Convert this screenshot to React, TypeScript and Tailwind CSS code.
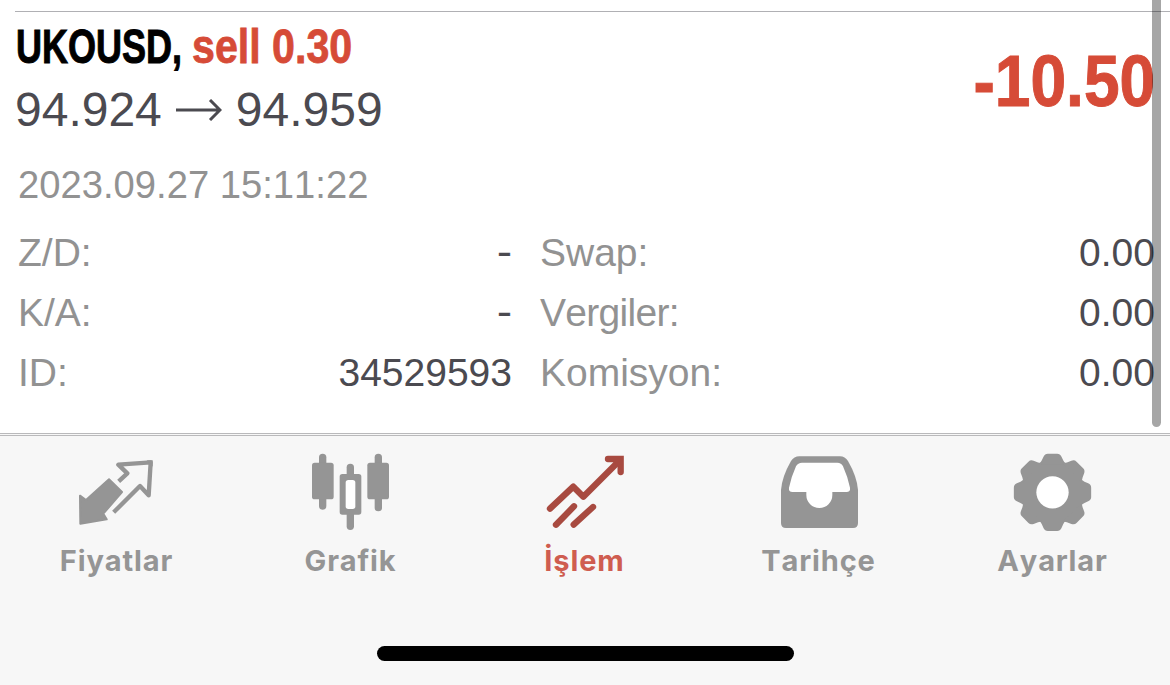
import { ReactNode } from 'react';
import clsx from 'clsx';

type Tab = {
  label: string;
  icon: ReactNode;
  active?: boolean;
};

const details = [
  { left: 'Z/D:', leftValue: '-', right: 'Swap:', rightValue: '0.00' },
  { left: 'K/A:', leftValue: '-', right: 'Vergiler:', rightValue: '0.00' },
  { left: 'ID:', leftValue: '34529593', right: 'Komisyon:', rightValue: '0.00' }
];

const gearAngles = [0, 45, 90, 135, 180, 225, 270, 315];

const QuotesIcon = () => (
  <svg viewBox="111 66 240 240" className="h-20 w-20" fill="#959595" stroke="#959595" strokeLinejoin="round">
    <path
      d="M207 148 L246 186 L190 251 L200 268 L121 281 L120 197 L138 210 Z"
      strokeWidth="6"
    />
    <path
      d="M236 154 L262 130 L235 104 L332 97 L326 196 L300 168 L221 247"
      fill="none"
      strokeWidth="13"
    />
    <path d="M320 91 H338 V110 Z" stroke="none" />
  </svg>
);

const ChartIcon = () => (
  <svg viewBox="93 66 240 240" className="h-20 w-20" fill="#959595">
    <rect x="117" y="71" width="22" height="168" rx="11" />
    <rect x="96" y="98" width="65" height="110" rx="8" />
    <rect x="200" y="101" width="22" height="199" rx="11" />
    <rect x="179" y="132" width="65" height="122" rx="8" />
    <rect x="197" y="150" width="29" height="87" rx="8" fill="#fff" />
    <rect x="284" y="71" width="22" height="173" rx="11" />
    <rect x="262" y="98" width="65" height="110" rx="8" />
  </svg>
);

const TradeIcon = () => (
  <svg
    viewBox="105 66 240 240"
    className="h-20 w-20"
    fill="none"
    stroke="#a84a40"
    strokeWidth="19"
    strokeLinecap="round"
    strokeLinejoin="round"
  >
    <path d="M120 236 L190 170 L220 200 L325 95" />
    <path d="M294 87 H332 V126" strokeLinejoin="miter" />
    <path d="M138 284 L192 229" />
    <path d="M191 284 L249 231" />
    <path d="M302 90 H333 V118 Z" fill="#a84a40" stroke="none" />
  </svg>
);

const HistoryIcon = () => (
  <svg viewBox="117 66 240 240" className="h-20 w-20">
    <path
      d="M178 79 H300 Q315 79 324 93 Q351 140 354 180 V279 Q354 294 339 294 H138 Q123 294 123 279 V180 Q126 140 153 93 Q162 79 178 79 Z"
      fill="#959595"
    />
    <path
      d="M186 98 H292 Q304 98 309 109 Q323 140 330 173 Q332 186 319 186 H277 V195 A39 39 0 0 1 199 195 V186 H158 Q145 186 147 173 Q154 140 168 109 Q174 98 186 98 Z"
      fill="#fff"
    />
  </svg>
);

const SettingsIcon = () => (
  <svg viewBox="99 66 240 240" className="h-20 w-20" fill="#959595">
    <g transform="translate(217.5 187)">
      <circle r="94" />
      {gearAngles.map((angle) => (
        <path
          key={angle}
          transform={`rotate(${angle})`}
          d="M-42 -84 Q-35 -89 -32 -96 L-27 -107 Q-23 -116 -14 -116 H14 Q23 -116 27 -107 L32 -96 Q35 -89 42 -84 Z"
        />
      ))}
      <circle r="48.5" fill="#fff" />
    </g>
  </svg>
);

const tabs: Tab[] = [
  { label: 'Fiyatlar', icon: <QuotesIcon /> },
  { label: 'Grafik', icon: <ChartIcon /> },
  { label: 'İşlem', icon: <TradeIcon />, active: true },
  { label: 'Tarihçe', icon: <HistoryIcon /> },
  { label: 'Ayarlar', icon: <SettingsIcon /> }
];

// an empty value is a hyphen, a bit wider than the font's own
function Value({ value }: { value: string }) {
  return (
    <span
      className={clsx(
        'text-[#4b4a50]',
        value === '-' && '-mt-px origin-right scale-x-[1.15] [-webkit-text-stroke:0.2px]'
      )}
    >
      {value}
    </span>
  );
}

function Position() {
  return (
    <section className="ml-[15px] mt-[11px] border-t border-[#b0b0b4] pr-[15px] pt-1">
      <div className="flex justify-between">
        <div>
          <div className="flex h-[60px] text-[49px] font-bold leading-[60px] whitespace-nowrap">
            <span className="ml-px block w-[176px] origin-left scale-x-[0.735] text-black [-webkit-text-stroke:1px]">
              UKOUSD,
            </span>
            <span className="block origin-left scale-x-[0.84] text-[#d64b37] [-webkit-text-stroke:0.8px]">
              sell 0.30
            </span>
          </div>
          <div className="mt-1 flex h-[60px] items-center text-[48px] leading-[60px] text-[#4b4a50]">
            <span>94.924</span>
            <svg viewBox="0 0 46 22" className="mx-[14px] h-[22px] w-[46px]" fill="none" stroke="#4b4a50" strokeWidth="3">
              <path d="M0 11 H44 M34 1 L44 11 L34 21" />
            </svg>
            <span>94.959</span>
          </div>
        </div>
        <div className="mt-[20px] origin-right scale-x-[0.89] text-[72px] font-bold leading-[90px] text-[#d64b37] [-webkit-text-stroke:1px]">
          -10.50
        </div>
      </div>
      <div className="ml-[3px] mt-[15px] text-[38.2px] leading-[60px] text-[#929292]">2023.09.27 15:11:22</div>
      <div className="ml-[3px] mt-2 text-[39px] leading-[60px] text-[#929292]">
        {details.map((row) => (
          <div key={row.left} className="flex">
            <div className="flex w-[494px] justify-between">
              <span>{row.left}</span>
              <Value value={row.leftValue} />
            </div>
            <div className="ml-[28px] flex flex-1 justify-between">
              <span className={clsx(row.right === 'Vergiler:' && 'tracking-[-0.7px]')}>{row.right}</span>
              <Value value={row.rightValue} />
            </div>
          </div>
        ))}
      </div>
    </section>
  );
}

export default function App() {
  return (
    <div className="relative flex h-[685px] w-[1170px] flex-col overflow-hidden bg-white font-['Liberation_Sans',Arial,sans-serif] [font-kerning:none]">
      <main className="h-[433px]">
        <Position />
      </main>

      <div className="absolute right-[9px] top-[-10px] h-[437px] w-[9px] rounded-full bg-black/35" />

      <footer className="flex flex-1 flex-col items-center border-t border-[#b9b9bb] bg-[#f7f7f7]">
        <div className="mt-px h-px w-full bg-[#b9b9bb]" />
        <nav className="grid w-full grid-cols-5 pt-4">
          {tabs.map((tab) => (
            <div key={tab.label} className="flex flex-col items-center">
              {tab.icon}
              <span
                className={clsx(
                  "mt-[9px] pr-px font-['Inter',sans-serif] text-[29px] font-bold leading-10 tracking-[0.9px]",
                  tab.active ? 'text-[#cf5d50]' : 'text-[#959595]'
                )}
              >
                {tab.label}
              </span>
            </div>
          ))}
        </nav>
        <div className="mt-[65px] h-[15px] w-[417px] rounded-full bg-black" />
      </footer>
    </div>
  );
}
